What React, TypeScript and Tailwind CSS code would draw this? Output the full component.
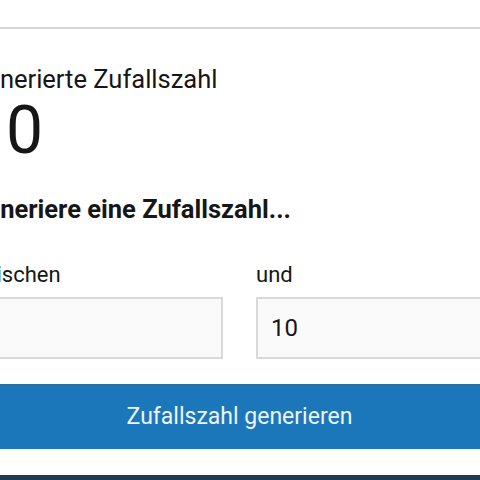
export default function App() {
  return (
    <div className="w-[480px] h-[480px] overflow-hidden bg-white font-['Roboto',sans-serif] text-[#161616]">
      <div className="h-[27px]" />
      <div className="h-[2px] bg-[#d6d6d6]" />

      <div className="ml-[-31px] w-[541px]">
        <div className="pt-[35px] text-[25.5px] leading-[30px]">Generierte Zufallszahl</div>
        <div className="mt-[4px] text-[66px] leading-[66px]">10</div>

        <h2 className="mt-[30px] text-[25.5px] leading-[30px] font-bold">Generiere eine Zufallszahl...</h2>

        <div className="mt-[38px] grid grid-cols-2 gap-x-[33px]">
          <label className="flex flex-col">
            <span className="text-[22px] leading-[26px]">zwischen</span>
            <input
              className="mt-[9px] h-[62px] border-2 border-[#dadada] bg-[#fafafa] px-[13px] text-[24px] outline-none"
              defaultValue=""
            />
          </label>
          <label className="flex flex-col">
            <span className="text-[22px] leading-[26px]">und</span>
            <input
              className="mt-[9px] h-[62px] border-2 border-[#dadada] bg-[#fafafa] px-[13px] text-[24px] outline-none"
              defaultValue="10"
            />
          </label>
        </div>

        <button className="mt-[25px] flex h-[65px] w-full items-center justify-center border-t-2 border-[#2c6e9e] bg-[#1b77b9] text-[23px] text-[#eef4fa]">
          Zufallszahl generieren
        </button>
      </div>

      <div className="mt-[26px] h-[10px] bg-[#1f3b53]" />
    </div>
  );
}
